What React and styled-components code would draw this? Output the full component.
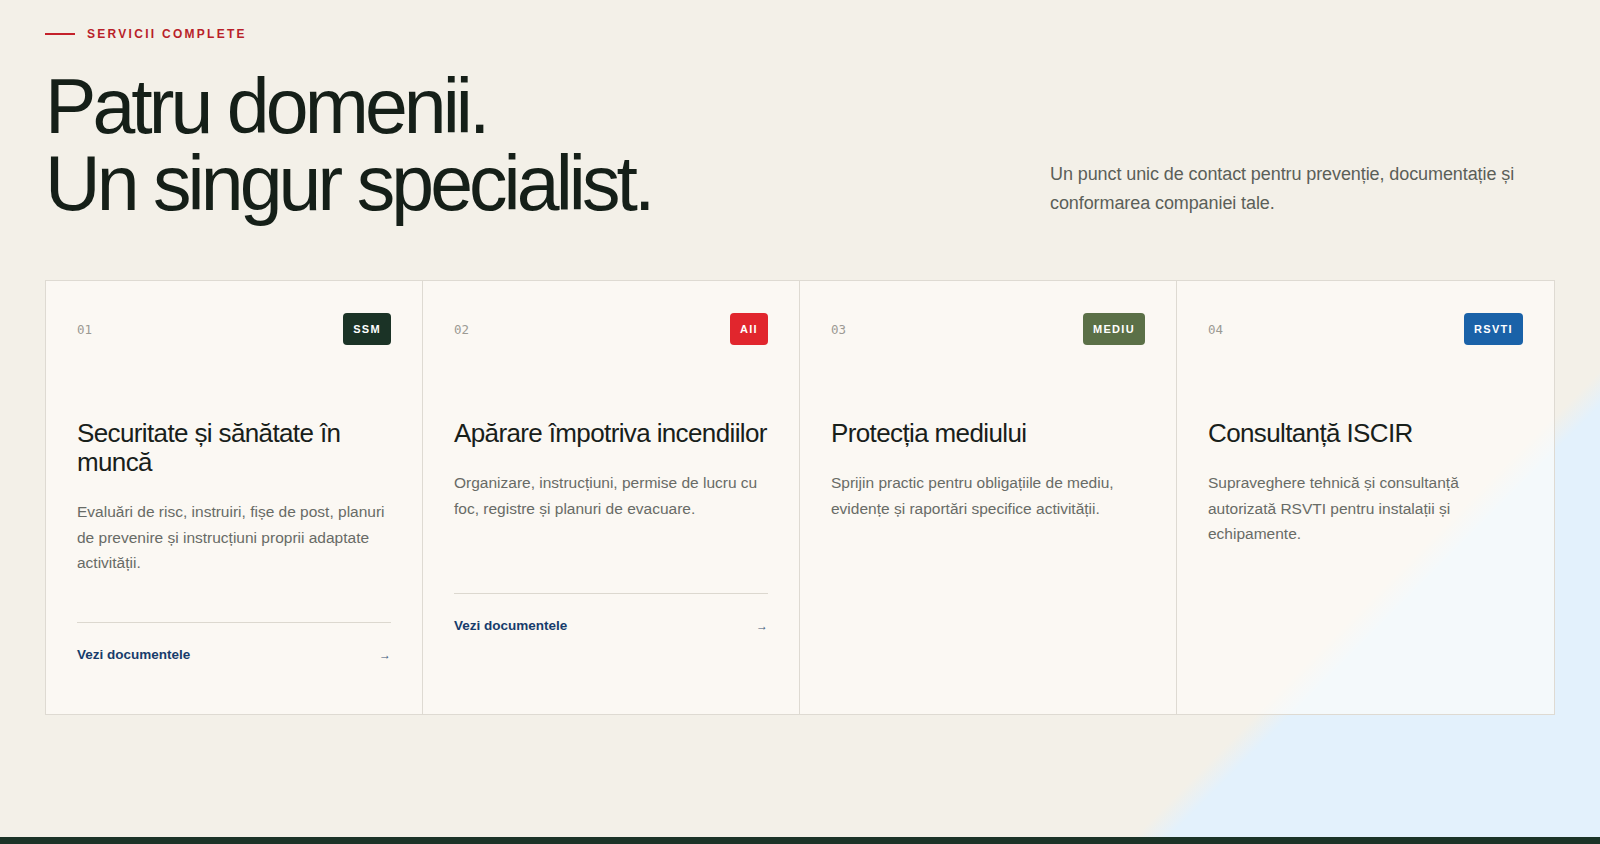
import React from "react";
import styled, { createGlobalStyle } from "styled-components";

const GlobalStyle = createGlobalStyle`
  * {
    box-sizing: border-box;
  }
  body {
    margin: 0;
    background: #f3f0e8;
    font-family: "Liberation Sans", Arial, sans-serif;
    color: #17211a;
  }
`;

const Services = styled.section`
  padding: 27px 45px 122px;
  background: linear-gradient(135deg, #f3f0e8 80.9%, #e3f1fc 82.3%);
`;

const Intro = styled.div`
  display: flex;
  justify-content: space-between;
  align-items: flex-end;
`;

const Eyebrow = styled.div`
  display: flex;
  align-items: center;
  gap: 12px;
  height: 14px;
  margin-bottom: 27px;
`;

const EyebrowRule = styled.span`
  display: block;
  width: 30px;
  height: 2px;
  background: #c4212b;
`;

const EyebrowLabel = styled.span`
  font-size: 12px;
  font-weight: 700;
  letter-spacing: 0.19em;
  color: #b91f2a;
  text-transform: uppercase;
`;

const Headline = styled.h2`
  margin: 0;
  font-size: 77px;
  font-weight: 400;
  line-height: 1;
  letter-spacing: -0.051em;
  color: #151f18;
`;

const Lead = styled.p`
  width: 505px;
  margin: 0 0 4px;
  font-size: 18px;
  line-height: 1.6;
  letter-spacing: -0.005em;
  color: #5b5f58;
`;

const Grid = styled.div`
  display: grid;
  grid-template-columns: repeat(4, 1fr);
  margin-top: 58px;
  border: 1px solid #dedad2;
`;

const Card = styled.article`
  display: flex;
  flex-direction: column;
  padding: 32px 31px 31px;
  background: rgba(255, 254, 250, 0.62);
  border-right: 1px solid #dedad2;

  &:last-child {
    border-right: none;
  }
`;

const CardHead = styled.div`
  display: flex;
  justify-content: space-between;
  align-items: center;
  margin-bottom: 74px;
`;

const Num = styled.span`
  font-family: "DejaVu Sans Mono", "Liberation Mono", monospace;
  font-size: 12.5px;
  color: #9c9a93;
`;

const Badge = styled.span`
  padding: 9px 10px;
  border-radius: 4px;
  background: ${(p) => p.$tone};
  color: #fff;
  font-size: 11px;
  font-weight: 700;
  line-height: 14px;
  letter-spacing: 0.12em;
`;

const CardTitle = styled.h3`
  margin: 0 0 22px;
  font-size: 26px;
  font-weight: 400;
  line-height: 29px;
  letter-spacing: -0.024em;
  color: #18201a;
`;

const CardText = styled.p`
  min-height: 91px;
  margin: 0;
  font-size: 15.5px;
  line-height: 1.65;
  color: #686b66;
`;

const CardLink = styled.a`
  display: flex;
  justify-content: space-between;
  align-items: center;
  margin-top: 32px;
  padding: 22px 0 18px;
  border-top: 1px solid #dcd8cf;
  font-size: 13.5px;
  font-weight: 700;
  line-height: 20px;
  color: #173c6b;
  text-decoration: none;
  cursor: pointer;
`;

const Arrow = styled.span`
  font-weight: 400;
  font-size: 12px;
  color: #3e5577;
`;

const FooterBand = styled.div`
  height: 90px;
  background: #1b3327;
`;

const services = [
  {
    num: "01",
    tag: "SSM",
    tone: "#1b3326",
    title: "Securitate și sănătate în muncă",
    text: "Evaluări de risc, instruiri, fișe de post, planuri de prevenire și instrucțiuni proprii adaptate activității.",
    docs: true,
  },
  {
    num: "02",
    tag: "AII",
    tone: "#e1262d",
    title: "Apărare împotriva incendiilor",
    text: "Organizare, instrucțiuni, permise de lucru cu foc, registre și planuri de evacuare.",
    docs: true,
  },
  {
    num: "03",
    tag: "MEDIU",
    tone: "#5b7047",
    title: "Protecția mediului",
    text: "Sprijin practic pentru obligațiile de mediu, evidențe și raportări specifice activității.",
  },
  {
    num: "04",
    tag: "RSVTI",
    tone: "#1a62a8",
    title: "Consultanță ISCIR",
    text: "Supraveghere tehnică și consultanță autorizată RSVTI pentru instalații și echipamente.",
  },
];

export default function App() {
  return (
    <>
      <GlobalStyle />
      <Services>
        <Intro>
          <div>
            <Eyebrow>
              <EyebrowRule />
              <EyebrowLabel>Servicii complete</EyebrowLabel>
            </Eyebrow>
            <Headline>
              Patru domenii.
              <br />
              Un singur specialist.
            </Headline>
          </div>
          <Lead>
            Un punct unic de contact pentru prevenție, documentație și
            conformarea companiei tale.
          </Lead>
        </Intro>

        <Grid>
          {services.map((s) => (
            <Card key={s.num}>
              <CardHead>
                <Num>{s.num}</Num>
                <Badge $tone={s.tone}>{s.tag}</Badge>
              </CardHead>
              <CardTitle>{s.title}</CardTitle>
              <CardText>{s.text}</CardText>
              {s.docs && (
                <CardLink>
                  Vezi documentele
                  <Arrow>→</Arrow>
                </CardLink>
              )}
            </Card>
          ))}
        </Grid>
      </Services>
      <FooterBand />
    </>
  );
}
